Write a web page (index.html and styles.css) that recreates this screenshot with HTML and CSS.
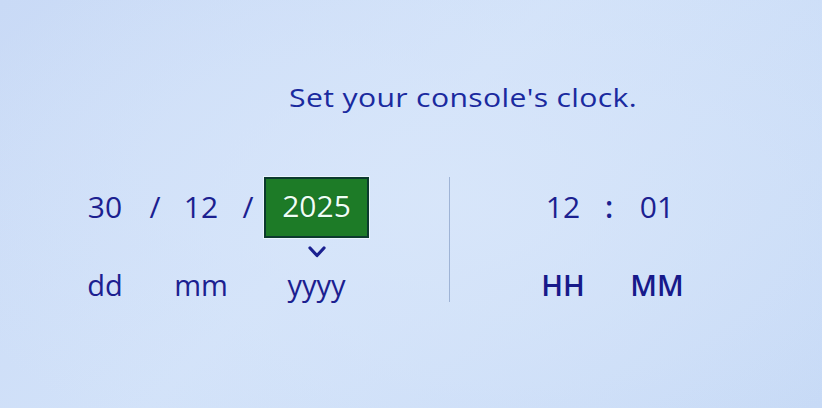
FILE: index.html
```html
<!DOCTYPE html>
<html lang="en">
<head>
<meta charset="utf-8">
<title>Set your console's clock</title>
<link rel="stylesheet" href="styles.css">
</head>
<body>
<main class="screen">
  <h1 class="title">Set your console's clock.</h1>
  <section class="clock">
    <div class="date">
      <div class="cell c-dd val">30</div>
      <div class="cell c-s1 val sep">/</div>
      <div class="cell c-mm val">12</div>
      <div class="cell c-s2 val sep sep2">/</div>
      <div class="cell c-yy val"><span class="box">2025</span></div>
      <div class="cell c-yy chev">
        <svg width="18" height="12" viewBox="0 0 18 12"><polyline points="2,2 9,9.5 16,2" fill="none" stroke="#1a2090" stroke-width="3.2" stroke-linecap="round" stroke-linejoin="round"/></svg>
      </div>
      <div class="cell c-dd lab">dd</div>
      <div class="cell c-mm lab">mm</div>
      <div class="cell c-yy lab">yyyy</div>
    </div>
    <div class="divider"></div>
    <div class="time">
      <div class="cell t-h val">12</div>
      <div class="cell t-c val colon">:</div>
      <div class="cell t-m val">01</div>
      <div class="cell t-h lab caps">HH</div>
      <div class="cell t-m lab caps">MM</div>
    </div>
  </section>
</main>
</body>
</html>
```

FILE: styles.css
```css
html, body {
  margin: 0;
  padding: 0;
}
body {
  width: 822px;
  height: 408px;
  overflow: hidden;
  font-family: "Open Sans", "Noto Sans", "DejaVu Sans", sans-serif;
  color: #1b2090;
  background:
    radial-gradient(ellipse 520px 300px at 440px 200px, rgba(216,230,250,0.9), rgba(216,230,250,0) 100%),
    linear-gradient(135deg, #c9daf6 0%, #d2e2f9 45%, #c7daf6 100%);
}
.screen {
  height: 408px;
  box-sizing: border-box;
  padding-top: 74px;
}
.title {
  display: inline-block;
  margin: 0 0 0 289px;
  font-size: 26px;
  font-weight: 500;
  line-height: 46px;
  color: #1a2a9f;
  letter-spacing: 0.3px;
  transform: scaleX(1.16);
  transform-origin: left center;
  white-space: nowrap;
}
.clock {
  display: flex;
  margin-top: 55px;
  padding-left: 80px;
}
.date {
  display: grid;
  grid-template-columns: 50px 50px 42px 42px 105px;
  grid-template-rows: 61px 37px 26px;
}
.time {
  display: grid;
  grid-template-columns: 60px 32px 64px;
  grid-template-rows: 61px 37px 26px;
  margin-left: 83px;
}
.cell {
  display: flex;
  justify-content: center;
  align-items: center;
  white-space: nowrap;
}
.c-dd { grid-column: 1; }
.c-s1 { grid-column: 2; }
.c-mm { grid-column: 3; }
.c-s2 { grid-column: 4; }
.c-yy { grid-column: 5; }
.t-h { grid-column: 1; }
.t-c { grid-column: 2; }
.t-m { grid-column: 3; }
.val {
  grid-row: 1;
  font-size: 30px;
  line-height: 1;
  padding-top: 3px;
}
.colon { font-weight: 600; }
.sep2 { padding-left: 10px; }
.chev {
  grid-row: 2;
  align-items: flex-start;
  padding-top: 10px;
}
.lab {
  grid-row: 3;
  font-size: 29px;
  line-height: 1;
  align-items: flex-end;
}
.caps {
  font-weight: 600;
  color: #17198a;
}
.box {
  box-sizing: border-box;
  width: 105px;
  height: 61px;
  display: flex;
  align-items: center;
  justify-content: center;
  background: #1d7b27;
  border: 2px solid #0c3a2e;
  box-shadow: 0 0 0 1px rgba(240,248,255,0.8);
  color: #eefff4;
  text-shadow: 0 0 1px #0a3a20;
  padding-bottom: 2px;
}
.divider {
  width: 1px;
  height: 125px;
  margin-left: 80px;
  background: #9fb4d6;
  align-self: flex-start;
  margin-top: 2px;
}
```
